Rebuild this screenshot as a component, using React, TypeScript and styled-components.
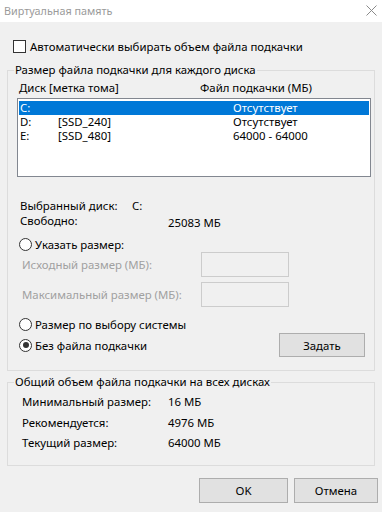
import React from 'react';
import styled, { createGlobalStyle } from 'styled-components';

const GlobalStyle = createGlobalStyle`
  html, body {
    margin: 0;
    padding: 0;
    background: #f0f0f0;
  }
  body {
    font-family: "Noto Sans", "Open Sans", sans-serif;
    font-size: 11.4px;
    color: #000;
  }
`;

const disks = [
  { letter: 'C:', label: '', size: 'Отсутствует', selected: true },
  { letter: 'D:', label: '[SSD_240]', size: 'Отсутствует', selected: false },
  { letter: 'E:', label: '[SSD_480]', size: '64000 - 64000', selected: false },
];

const totals = [
  { name: 'Минимальный размер:', value: '16 МБ' },
  { name: 'Рекомендуется:', value: '4976 МБ' },
  { name: 'Текущий размер:', value: '64000 МБ' },
];

const App: React.FC = () => {
  return (
    <Window>
      <GlobalStyle />
      <TitleBar>
        <Title>Виртуальная память</Title>
        <CloseIcon width="11" height="11" viewBox="0 0 11 11">
          <path d="M0.5 0.5 L10.5 10.5 M10.5 0.5 L0.5 10.5" stroke="#8a8a8a" strokeWidth="1" fill="none" />
        </CloseIcon>
      </TitleBar>

      <Body>
        <CheckRow>
          <CheckBox />
          <span>Автоматически выбирать объем файла подкачки</span>
        </CheckRow>

        <Group $height={308}>
          <Legend>Размер файла подкачки для каждого диска</Legend>
          <ColumnHeader>
            <DiskCol>Диск [метка тома]</DiskCol>
            <span>Файл подкачки (МБ)</span>
          </ColumnHeader>
          <ListBox>
            {disks.map((d) => (
              <ListRow key={d.letter} $selected={d.selected}>
                <LetterCell>{d.letter}</LetterCell>
                <LabelCell>{d.label}</LabelCell>
                <span>{d.size}</span>
              </ListRow>
            ))}
          </ListBox>

          <InfoRow $top={21}>
            <InfoName>Выбранный диск:</InfoName>
            <span>C:</span>
          </InfoRow>
          <InfoRow $top={0}>
            <InfoName>Свободно:</InfoName>
            <FreeValue>25083 МБ</FreeValue>
          </InfoRow>

          <RadioRow $top={8}>
            <Radio $checked={false} />
            <span>Указать размер:</span>
          </RadioRow>
          <InputRow $top={0}>
            <DisabledLabel>Исходный размер (МБ):</DisabledLabel>
            <SizeInput />
          </InputRow>
          <InputRow $top={5}>
            <DisabledLabel>Максимальный размер (МБ):</DisabledLabel>
            <SizeInput />
          </InputRow>
          <RadioRow $top={9}>
            <Radio $checked={false} />
            <span>Размер по выбору системы</span>
          </RadioRow>
          <LastRow>
            <RadioInline>
              <Radio $checked />
              <span>Без файла подкачки</span>
            </RadioInline>
            <SetButton>Задать</SetButton>
          </LastRow>
        </Group>

        <Group $height={91} $top={4}>
          <Legend>Общий объем файла подкачки на всех дисках</Legend>
          <TotalsList>
            {totals.map((t) => (
              <TotalRow key={t.name}>
                <TotalName>{t.name}</TotalName>
                <span>{t.value}</span>
              </TotalRow>
            ))}
          </TotalsList>
        </Group>

        <Footer>
          <DialogButton>OK</DialogButton>
          <DialogButton>Отмена</DialogButton>
        </Footer>
      </Body>
    </Window>
  );
};

// Styled Components
const Window = styled.div`
  width: 382px;
  height: 512px;
  background: #f0f0f0;
  overflow: hidden;
  display: flex;
  flex-direction: column;
`;

const TitleBar = styled.div`
  height: 22px;
  background: #ffffff;
  display: flex;
  align-items: center;
  justify-content: space-between;
  padding: 0 5px 0 4px;
`;

const Title = styled.span`
  color: #9a9a9a;
  font-size: 10.8px;
  margin-top: -1px;
`;

const CloseIcon = styled.svg`
  display: block;
  margin-top: -1px;
`;

const Body = styled.div`
  display: flex;
  flex-direction: column;
  padding: 0 7px;
`;

const CheckRow = styled.label`
  display: flex;
  align-items: center;
  gap: 4px;
  height: 14px;
  margin: 17px 0 0 6px;
`;

const CheckBox = styled.span`
  width: 11px;
  height: 11px;
  border: 1px solid #333333;
  background: #ffffff;
`;

const Group = styled.fieldset<{ $height: number; $top?: number }>`
  margin: ${(p) => (p.$top ? p.$top : 10)}px 0 0 0;
  padding: 0 2px 0 9px;
  border: 1px solid #dcdcdc;
  height: ${(p) => p.$height}px;
  width: 368px;
  box-sizing: border-box;
  min-width: 0;
`;

const Legend = styled.legend`
  padding: 0 1px;
  margin-left: -3px;
  line-height: 14px;
`;

const ColumnHeader = styled.div`
  display: flex;
  height: 14px;
  line-height: 14px;
  margin-top: 4px;
  padding-left: 2px;
`;

const DiskCol = styled.span`
  width: 181px;
`;

const ListBox = styled.div`
  margin-top: 3px;
  width: 354px;
  height: 79px;
  border: 1px solid #828790;
  background: #ffffff;
  padding: 2px 1px;
  box-sizing: border-box;
`;

const ListRow = styled.div<{ $selected: boolean }>`
  display: flex;
  align-items: center;
  height: 14px;
  line-height: 14px;
  padding-left: 1px;
  background: ${(p) => (p.$selected ? '#0078d7' : 'transparent')};
  color: ${(p) => (p.$selected ? '#ffffff' : '#000000')};
`;

const LetterCell = styled.span`
  width: 38px;
`;

const LabelCell = styled.span`
  width: 175px;
`;

const InfoRow = styled.div<{ $top: number }>`
  display: flex;
  height: 15px;
  line-height: 15px;
  margin-top: ${(p) => p.$top}px;
  padding-left: 3px;
`;

const InfoName = styled.span`
  width: 112px;
`;

const FreeValue = styled.span`
  margin-left: 36px;
  margin-top: 2px;
`;

const RadioRow = styled.label<{ $top: number }>`
  display: flex;
  align-items: center;
  gap: 3px;
  height: 16px;
  margin-top: ${(p) => p.$top}px;
  padding-left: 2px;
`;

const RadioInline = styled.label`
  display: flex;
  align-items: center;
  gap: 3px;
`;

const Radio = styled.span<{ $checked: boolean }>`
  width: 11px;
  height: 11px;
  border: 1px solid #333333;
  border-radius: 50%;
  background: #ffffff;
  display: flex;
  align-items: center;
  justify-content: center;
  &::after {
    content: '';
    width: 6px;
    height: 6px;
    border-radius: 50%;
    background: #333333;
    display: ${(p) => (p.$checked ? 'block' : 'none')};
  }
`;

const InputRow = styled.div<{ $top: number }>`
  display: flex;
  align-items: center;
  height: 25px;
  margin-top: ${(p) => p.$top}px;
  padding-left: 5px;
`;

const DisabledLabel = styled.span`
  width: 179px;
  color: #a0a0a0;
`;

const SizeInput = styled.div`
  width: 88px;
  height: 25px;
  box-sizing: border-box;
  border: 1px solid #cccccc;
  background: #f0f0f0;
`;

const LastRow = styled.div`
  display: flex;
  align-items: center;
  justify-content: space-between;
  height: 24px;
  margin-top: 1px;
  padding-left: 2px;
`;

const SetButton = styled.button`
  width: 86px;
  height: 24px;
  box-sizing: border-box;
  border: 1px solid #adadad;
  background: #e1e1e1;
  font-family: inherit;
  font-size: 11.4px;
  color: #000;
  padding: 0;
  margin-right: 7px;
`;

const TotalsList = styled.div`
  display: flex;
  flex-direction: column;
  margin-top: 3px;
  padding-left: 5px;
`;

const TotalRow = styled.div`
  display: flex;
  height: 20.5px;
  line-height: 20px;
`;

const TotalName = styled.span`
  width: 146px;
`;

const Footer = styled.div`
  display: flex;
  justify-content: flex-end;
  gap: 6px;
  margin-top: 12px;
`;

const DialogButton = styled.button`
  width: 89px;
  height: 25px;
  box-sizing: border-box;
  border: 1px solid #adadad;
  background: #e1e1e1;
  font-family: inherit;
  font-size: 11.4px;
  color: #000;
  padding: 0;
  &:last-child {
    width: 84px;
    margin-right: -3px;
  }
`;

export default App;
